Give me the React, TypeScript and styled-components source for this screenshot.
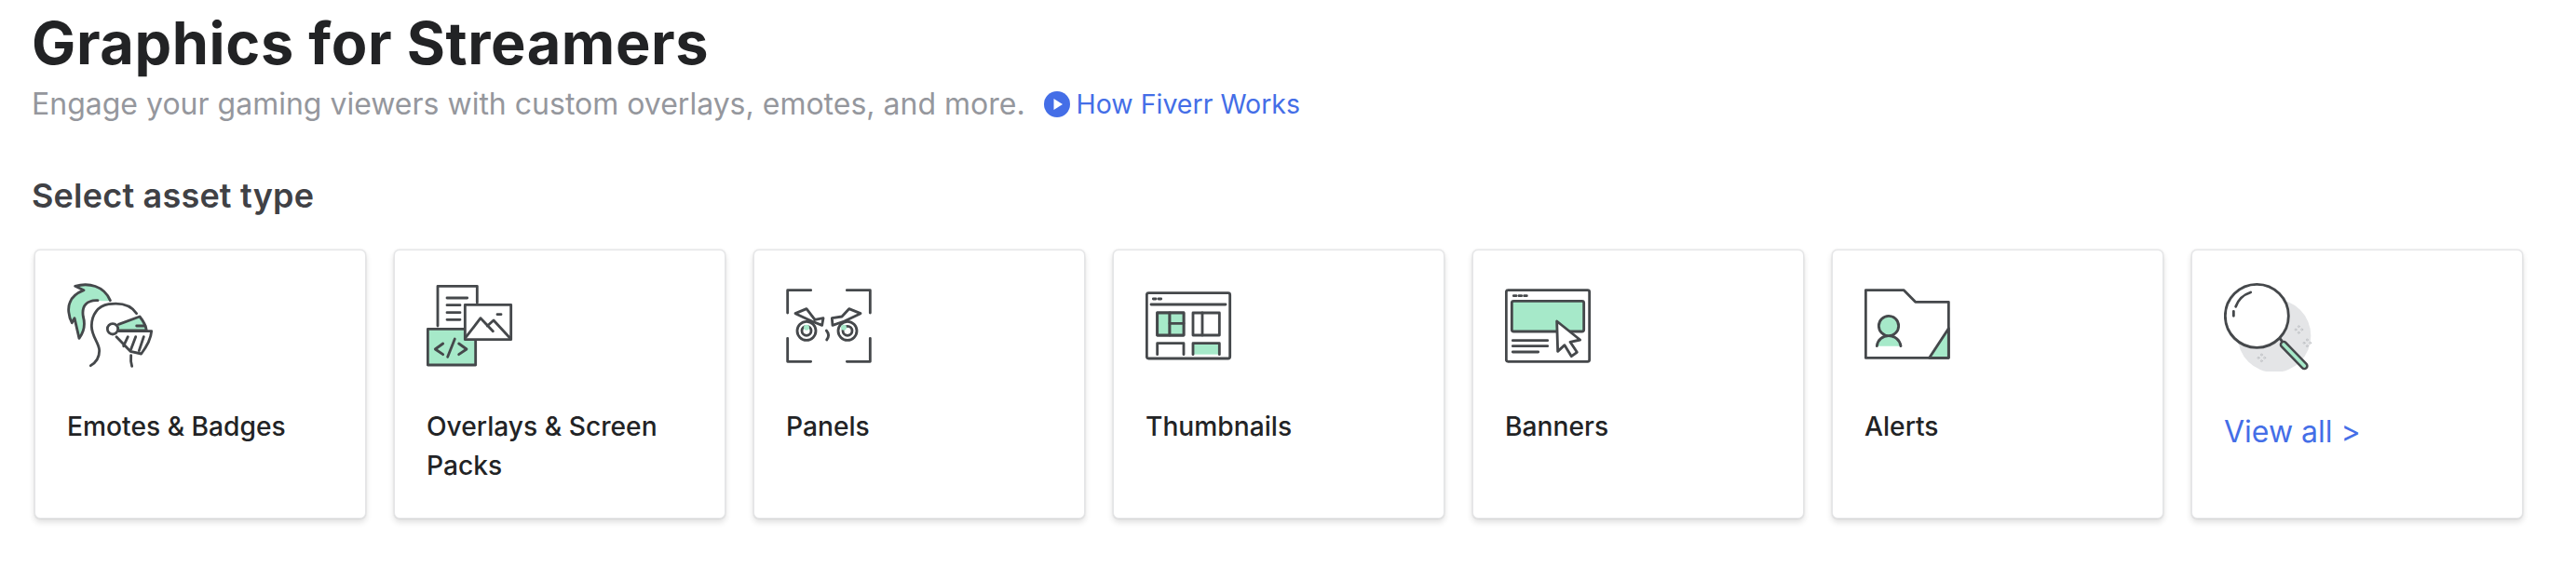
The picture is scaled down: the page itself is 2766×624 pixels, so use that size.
import React from 'react';
import styled, { createGlobalStyle } from 'styled-components';

const GlobalStyle = createGlobalStyle`
    html, body {
        margin: 0;
        padding: 0;
        background: #fff;
    }
    body {
        font-family: Inter, "Liberation Sans", sans-serif;
    }
`

const Page = styled.div`
    width: 2766px;
    height: 624px;
    box-sizing: border-box;
    padding: 0 0 0 34px;
    overflow: hidden;
`

const Title = styled.h1`
    margin: 0;
    padding-top: 8px;
    font-size: 63px;
    line-height: 76px;
    font-weight: 700;
    letter-spacing: 0.6px;
    color: #222325;
`

const Intro = styled.div`
    display: flex;
    align-items: center;
    margin-top: 6px;
    height: 44px;
    font-size: 32px;
    line-height: 44px;
    color: #95979d;
`

const HowLink = styled.a`
    display: flex;
    align-items: center;
    gap: 7px;
    margin-left: 20px;
    color: #446ee7;
    font-size: 28.5px;
`

const Heading = styled.h2`
    margin: 54px 0 0;
    font-size: 36px;
    line-height: 44px;
    font-weight: 600;
    letter-spacing: 0.2px;
    color: #404145;
`

const Cards = styled.div`
    display: flex;
    gap: 30px;
    margin: 36px 0 0 3px;
`

const Card = styled.div`
    box-sizing: border-box;
    width: 356px;
    height: 289px;
    padding: 30px 30px 0 34px;
    background: #fff;
    border: 1px solid #e4e5e7;
    border-radius: 6px;
    box-shadow: 0 0 2px rgba(34, 35, 37, 0.18), 0 4px 6px rgba(34, 35, 37, 0.14);
`

const Icon = styled.svg.attrs({ width: 100, height: 100, fill: 'none' })`
    display: block;
    stroke: #45484b;
    stroke-width: 8.5;
    stroke-linecap: round;
    stroke-linejoin: round;
`

const Label = styled.div`
    margin-top: 38px;
    font-size: 28.2px;
    line-height: 42px;
    font-weight: 500;
    color: #222325;
`

const ViewAll = styled.a`
    display: block;
    margin-top: 44px;
    font-size: 32px;
    line-height: 42px;
    color: #446ee7;
`

const GREEN = '#a6e9c9';

const Knight = () => (
    <Icon viewBox="66 27 300 300">
        <path fill={GREEN} stroke="none" d="M92 52 C135 40 185 50 205 98 C185 103 165 97 145 96 C125 96 112 115 118 150 C125 175 120 200 107 220 L90 155 L82 170 C70 150 68 120 75 105 C80 90 95 75 120 65 Z" />
        <path d="M205 98 C185 50 135 40 92 52 L120 65 C95 75 80 90 75 105 C68 120 70 150 82 170 L90 155 L105 220 C120 200 125 175 118 150 C112 115 130 96 165 98" />
        <path d="M290 140 C270 110 235 105 200 110 C165 115 145 145 145 180 C145 215 170 235 170 260 C170 285 155 300 142 308" />
        <path fill={GREEN} d="M232 175 L300 150 C312 165 320 178 322 195 L232 195" />
        <path d="M290 180 H318" />
        <circle cx="213" cy="190" r="17" fill="#fff" />
        <path fill="#fff" d="M232 197 H338 C336 225 320 250 305 270 L270 262 L225 215" />
        <path d="M262 215 L248 245 M287 215 L272 255 M313 215 L298 260" />
        <path d="M272 275 Q270 295 275 310" />
    </Icon>
)

const Overlays = () => (
    <Icon viewBox="54 27 300 300">
        <path d="M90 180 V52 H217 V105" />
        <path d="M120 90 H185 M120 113 H162 M120 137 H162 M120 160 H162" />
        <rect x="58" y="190" width="154" height="116" fill={GREEN} />
        <path d="M107 237 L82 255 L107 272 M158 237 L183 255 L158 272 M145 222 L122 280" />
        <rect x="178" y="112" width="148" height="112" fill="#fff" />
        <path d="M182 215 L228 155 L268 197 M250 180 L270 162 L322 218" />
        <path d="M282 143 H294" />
    </Icon>
)

const Panels = () => (
    <Icon viewBox="42 27 300 300">
        <path d="M47 138 V65 H122 M238 65 H313 V138 M47 220 V295 H122 M238 295 H313 V220" />
        <circle cx="108" cy="196" r="30" />
        <circle cx="108" cy="196" r="15" />
        <circle cx="108" cy="185" r="9" fill={GREEN} stroke="none" />
        <path fill="#fff" d="M72 140 L108 125 L135 160 L162 155 L158 178 L125 165 Z" />
        <circle cx="240" cy="196" r="30" />
        <circle cx="240" cy="196" r="15" />
        <circle cx="228" cy="185" r="9" fill={GREEN} stroke="none" />
        <path fill="#fff" d="M282 140 L245 125 L222 150 L190 155 L192 178 L230 165 Z" />
        <path d="M172 195 Q185 210 173 225" />
    </Icon>
)

const Thumbnails = () => (
    <Icon viewBox="60 27 300 300">
        <rect x="64" y="74" width="268" height="211" rx="6" />
        <path d="M85 93 H93 M102 93 H110 M78 111 H318" />
        <rect x="98" y="138" width="85" height="72" />
        <rect x="98" y="138" width="40" height="72" fill={GREEN} />
        <rect x="138" y="138" width="45" height="34" fill={GREEN} />
        <rect x="138" y="172" width="45" height="38" fill={GREEN} />
        <rect x="213" y="138" width="85" height="72" />
        <path d="M243 138 V210" />
        <path d="M98 272 V236 H183 V272" />
        <path fill={GREEN} d="M213 272 V236 H298 V272" />
    </Icon>
)

const Banners = () => (
    <Icon viewBox="48 27 300 300">
        <rect x="52" y="65" width="268" height="230" rx="6" />
        <path d="M76 83 H84 M93 83 H101 M110 83 H118" />
        <rect x="70" y="100" width="232" height="98" rx="6" fill={GREEN} />
        <path d="M73 227 H185 M73 245 H185 M73 264 H155" />
        <path fill="#fff" d="M215 165 L290 225 L258 232 L280 265 L262 278 L240 242 L218 262 Z" />
    </Icon>
)

const Alerts = () => (
    <Icon viewBox="36 27 300 300">
        <path d="M40 65 H163 L200 103 H307 V283 H40 Z" />
        <path fill={GREEN} d="M245 283 L307 188 V283 Z" />
        <path fill={GREEN} d="M76 245 C78 225 95 212 114 212 C133 212 150 225 153 245" />
        <circle cx="114" cy="180" r="32" fill={GREEN} />
    </Icon>
)

const Sparkle = ({ x, y }: { x: number; y: number }) => (
    <g stroke="#bdbfc3" strokeWidth="2.5">
        <circle cx={x} cy={y - 10} r="3" />
        <circle cx={x} cy={y + 10} r="3" />
        <circle cx={x - 10} cy={y} r="3" />
        <circle cx={x + 10} cy={y} r="3" />
    </g>
)

const Magnifier = () => (
    <Icon viewBox="54 27 300 300">
        <circle cx="216" cy="212" r="118" fill="#e4e5e7" stroke="none" />
        <Sparkle x={295} y={192} />
        <Sparkle x={322} y={235} />
        <Sparkle x={175} y={283} />
        <path d="M232 218 L240 228" />
        <path d="M246 240 L313 309" strokeWidth="26" />
        <path d="M246 240 L313 309" stroke={GREEN} strokeWidth="11" />
        <circle cx="160" cy="148" r="102" fill="#fff" />
        <path d="M92 118 C100 95 115 80 140 72 M85 133 V148" />
    </Icon>
)

const PlayIcon = () => (
    <svg width="28" height="28" viewBox="0 0 28 28">
        <circle cx="14" cy="14" r="14" fill="#446ee7" />
        <path d="M10.5 8 L20 14 L10.5 20 Z" fill="#fff" />
    </svg>
)

const assets = [
    { name: 'Emotes & Badges', icon: <Knight /> },
    { name: 'Overlays & Screen Packs', icon: <Overlays /> },
    { name: 'Panels', icon: <Panels /> },
    { name: 'Thumbnails', icon: <Thumbnails /> },
    { name: 'Banners', icon: <Banners /> },
    { name: 'Alerts', icon: <Alerts /> },
]

export default function App() {
    return (
        <>
            <GlobalStyle />
            <Page>
                <Title>Graphics for Streamers</Title>
                <Intro>
                    Engage your gaming viewers with custom overlays, emotes, and more.
                    <HowLink><PlayIcon />How Fiverr Works</HowLink>
                </Intro>
                <Heading>Select asset type</Heading>
                <Cards>
                    {assets.map(({ name, icon }) => (
                        <Card key={name}>
                            {icon}
                            <Label>{name}</Label>
                        </Card>
                    ))}
                    <Card>
                        <Magnifier />
                        <ViewAll>View all &gt;</ViewAll>
                    </Card>
                </Cards>
            </Page>
        </>
    )
}
